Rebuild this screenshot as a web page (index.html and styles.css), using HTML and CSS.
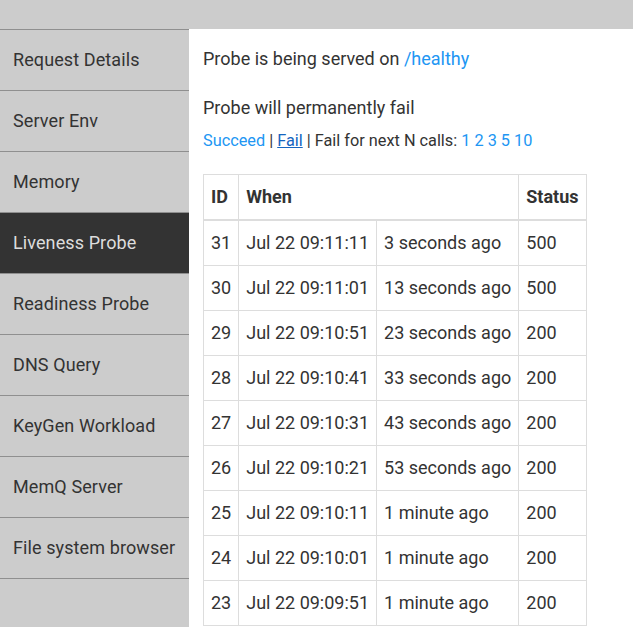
FILE: index.html
```html
<!DOCTYPE html>
<html>
<head>
<meta charset="utf-8">
<link rel="stylesheet" href="styles.css">
</head>
<body>
<div class="topbar"></div>
<div class="layout">
  <nav class="sidebar">
    <a class="nav-item">Request Details</a>
    <a class="nav-item">Server Env</a>
    <a class="nav-item">Memory</a>
    <a class="nav-item active">Liveness Probe</a>
    <a class="nav-item">Readiness Probe</a>
    <a class="nav-item">DNS Query</a>
    <a class="nav-item">KeyGen Workload</a>
    <a class="nav-item">MemQ Server</a>
    <a class="nav-item last">File system browser</a>
  </nav>
  <main class="content">
    <p class="line first">Probe is being served on <a class="link">/healthy</a></p>
    <p class="line second">Probe will permanently fail</p>
    <p class="actions"><a class="link">Succeed</a> | <a class="link current">Fail</a> | Fail for next N calls: <a class="link">1</a> <a class="link">2</a> <a class="link">3</a> <a class="link">5</a> <a class="link">10</a></p>
    <table class="probes">
      <thead>
        <tr><th>ID</th><th colspan="2">When</th><th>Status</th></tr>
      </thead>
      <tbody>
        <tr><td>31</td><td>Jul 22 09:11:11</td><td>3 seconds ago</td><td>500</td></tr>
        <tr><td>30</td><td>Jul 22 09:11:01</td><td>13 seconds ago</td><td>500</td></tr>
        <tr><td>29</td><td>Jul 22 09:10:51</td><td>23 seconds ago</td><td>200</td></tr>
        <tr><td>28</td><td>Jul 22 09:10:41</td><td>33 seconds ago</td><td>200</td></tr>
        <tr><td>27</td><td>Jul 22 09:10:31</td><td>43 seconds ago</td><td>200</td></tr>
        <tr><td>26</td><td>Jul 22 09:10:21</td><td>53 seconds ago</td><td>200</td></tr>
        <tr><td>25</td><td>Jul 22 09:10:11</td><td>1 minute ago</td><td>200</td></tr>
        <tr><td>24</td><td>Jul 22 09:10:01</td><td>1 minute ago</td><td>200</td></tr>
        <tr><td>23</td><td>Jul 22 09:09:51</td><td>1 minute ago</td><td>200</td></tr>
      </tbody>
    </table>
  </main>
</div>
</body>
</html>
```
FILE: styles.css
```css
html, body {
  margin: 0;
  padding: 0;
  background: #cccccc;
  font-family: Roboto, "Liberation Sans", sans-serif;
  color: #333333;
  overflow: hidden;
  height: 627px;
}
.topbar {
  height: 29px;
  background: #cccccc;
}
.layout {
  display: flex;
  align-items: stretch;
  height: 598px;
}
.sidebar {
  width: 189px;
  flex: 0 0 189px;
  display: flex;
  flex-direction: column;
  background: #cccccc;
}
.nav-item {
  display: flex;
  align-items: center;
  height: 60px;
  box-sizing: border-box;
  height: 61px;
  border-top: 1px solid #8f8f8f;
  padding: 0 13px 2px 13px;
  font-size: 18px;
  letter-spacing: 0.1px;
  color: #333333;
}
.nav-item.last {
  border-bottom: 1px solid #8f8f8f;
  height: 62px;
}
.nav-item.active {
  background: #333333;
  color: #dddddd;
}
.content {
  flex: 1;
  background: #ffffff;
  padding: 19px 14px 0 14px;
}
.line {
  margin: 0;
  font-size: 18px;
  line-height: 21px;
}
.second {
  margin-top: 28px;
}
.actions {
  margin: 13px 0 0 0;
  font-size: 16.3px;
  line-height: 19px;
}
.link {
  color: #2196f3;
  text-decoration: none;
}
.link.current {
  color: #1565c0;
  text-decoration: underline;
}
.probes {
  margin-top: 24px;
  border-collapse: collapse;
  font-size: 18px;
}
.probes th,
.probes td {
  border: 1px solid #dddddd;
  padding: 12px 7px;
  line-height: 20px;
  text-align: left;
  white-space: nowrap;
}
.probes th {
  font-weight: bold;
  border-bottom: 2px solid #dddddd;
}
```
